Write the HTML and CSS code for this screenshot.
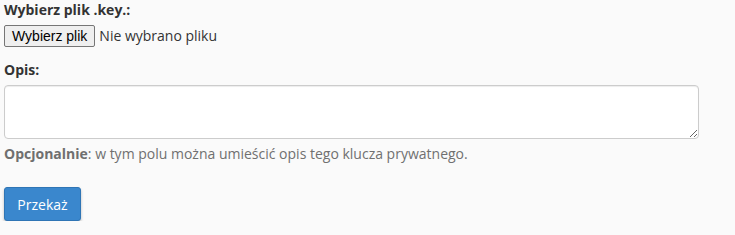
FILE: index.html
```html
<!DOCTYPE html>
<html lang="pl">
    <head>
        <meta charset="UTF-8">
        <meta name="viewport" content="width=device-width, initial-scale=1.0">
        <title>Prześlij klucz</title>
        <link rel="stylesheet" href="styles.css">
    </head>
    <body>
        <form class="key-form" action="/upload-key" novalidate>
            <div class="form-group">
                <label for="keyfile">Wybierz plik .key.:</label>
                <div class="file-row">
                    <button type="button" class="file-btn">Wybierz plik</button>
                    <span class="file-name">Nie wybrano pliku</span>
                </div>
            </div>
            <div class="form-group">
                <label for="desc">Opis:</label>
                <textarea name="desc" id="desc" class="form-control"></textarea>
                <div class="help-block"><strong>Opcjonalnie</strong>: w tym polu można umieścić opis tego klucza prywatnego.</div>
            </div>
            <div class="form-group">
                <button type="submit" class="btn btn-primary">Przekaż</button>
            </div>
        </form>
    </body>
</html>
```

FILE: styles.css
```css
* {
    box-sizing: border-box;
}

html {
    font-size: 14px;
}

body {
    margin: 0;
    padding: 0 4px;
    background: #fafafa;
    color: #333;
    font-family: "Open Sans", sans-serif;
    line-height: 20px;
}

.key-form {
    width: 695px;
}

label {
    display: block;
    font-weight: bold;
    margin-bottom: 5px;
}

.file-row {
    display: flex;
    align-items: center;
    gap: 4px;
    margin-top: 2px;
}

.file-btn {
    font-family: "Liberation Sans", Arial, sans-serif;
    font-size: 14px;
    color: #000;
    height: 22px;
    padding: 0 7px;
    line-height: 18px;
    background: #efefef;
    border: 1px solid #767676;
    border-radius: 2px;
}

.file-name {
    color: #333;
}

.form-group:nth-child(2) {
    margin-top: 13px;
}

.form-control {
    display: block;
    width: 695px;
    height: 54px;
    border: 1px solid #ccc;
    border-radius: 4px;
    background: #fff;
    box-shadow: inset 0 1px 1px rgba(0, 0, 0, 0.075);
    font-family: inherit;
    font-size: 14px;
    margin-top: 5px;
}

.help-block {
    color: #707070;
    margin-top: 5px;
}

.help-block strong {
    color: #6f6f6f;
}

.form-group:nth-child(3) {
    margin-top: 23px;
}

.btn {
    font-family: "Open Sans", sans-serif;
    font-size: 14px;
    height: 34px;
    padding: 0 12px;
    width: 77px;
    border-radius: 3px;
    cursor: pointer;
}

.btn-primary {
    color: #fff;
    background: #3a87cd;
    border: 1px solid #2f75b5;
    box-shadow: 0 2px 3px rgba(0, 0, 0, 0.25);
}
```
